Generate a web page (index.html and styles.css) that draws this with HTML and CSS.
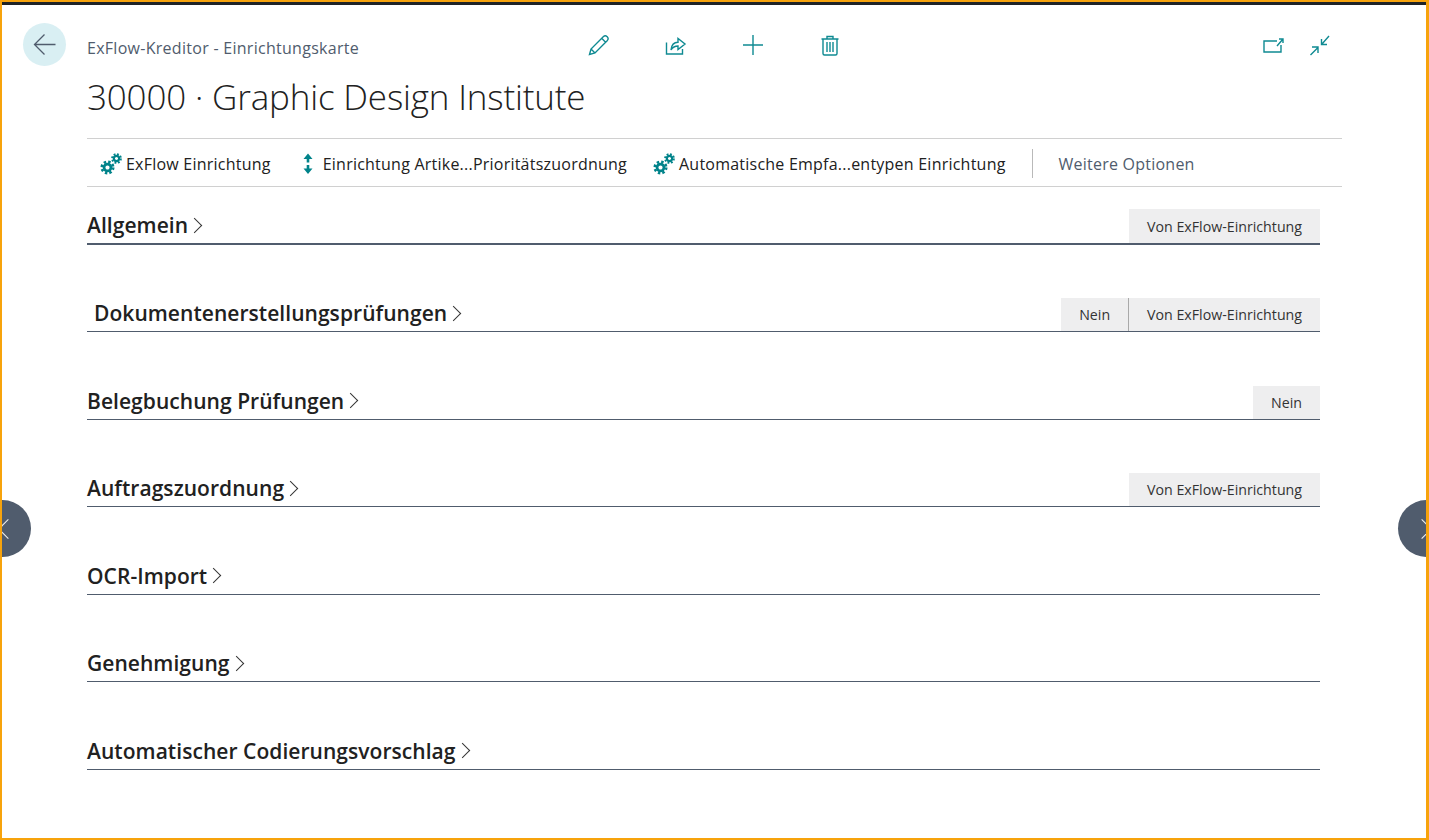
FILE: index.html
```html
<!DOCTYPE html>
<html lang="de">
<head>
    <meta charset="UTF-8">
    <title>ExFlow-Kreditor - Einrichtungskarte</title>
    <link rel="stylesheet" href="styles.css">
</head>
<body>
    <div class="page">
        <header class="top-row">
            <button class="back-button" type="button" aria-label="Zurück">
                <svg width="24" height="24" viewBox="0 0 24 24" fill="none" stroke="#505c6d" stroke-width="1.3"><path d="M22.5 11.5H1.5M11.5 1.5L1.5 11.5L11.5 21.5"/></svg>
            </button>
            <div class="breadcrumb">ExFlow-Kreditor - Einrichtungskarte</div>
            <div class="page-actions">
                <svg class="icon" viewBox="0 0 22 22"><path d="M1.5 20.5L3 15L15.5 2.5C16.5 1.5 18 1.5 19.2 2.7C20.3 3.9 20.4 5.3 19.4 6.4L7 18.9L1.5 20.5ZM3 15L7 18.9M13.7 4.3L17.6 8.2"/></svg>
                <svg class="icon" viewBox="0 0 22 22"><path d="M1.500 8.5V20H17.500V15M6 16C6.500 11 9.500 8.3 13 8.3V4.5L20 10L13 15.500V12C10 12 7.500 13.500 6 16Z"/></svg>
                <svg class="icon" viewBox="0 0 22 22"><path d="M11 1V21M1 11H21"/></svg>
                <svg class="icon" viewBox="0 0 22 22"><path d="M4 5V19.500C4 20.300 4.700 21 5.500 21H16.500C17.300 21 18 20.300 18 19.500V5M2.500 5H19.500M8 5V2.500H14V5M8 8V18M11 8V18M14 8V18"/></svg>
            </div>
            <div class="window-actions">
                <svg class="icon" viewBox="0 0 22 22"><path d="M15 7H2V18H19V11M15 12L21 5M17 5H21V9"/></svg>
                <svg class="icon" viewBox="0 0 22 22"><path d="M20 2L13 10M12.500 5V10.500H18M1.500 21L9 13.500M3 13H9V19"/></svg>
            </div>
        </header>

        <h1 class="page-title">30000 · Graphic Design Institute</h1>

        <nav class="action-bar">
            <a class="action" href="#">
                <svg class="gears" viewBox="0 0 22 22"><use href="#gears"/></svg>
                ExFlow Einrichtung
            </a>
            <a class="action action-sort" href="#">
                <svg class="updown" viewBox="0 0 12 22"><path d="M6 .5L10.500 6H7.300V9.500H4.700V6H1.500ZM6 21L10.500 15.500H7.300V12H4.700V15.500H1.500Z"/></svg>
                Einrichtung Artike...Prioritätszuordnung
            </a>
            <a class="action" href="#">
                <svg class="gears" viewBox="0 0 22 22"><use href="#gears"/></svg>
                Automatische Empfa...entypen Einrichtung
            </a>
            <span class="action-divider"></span>
            <a class="action more" href="#">Weitere Optionen</a>
        </nav>

        <main class="sections">
            <section class="fasttab fasttab-focus">
                <h2>Allgemein<span class="chevron"></span></h2>
                <div class="summary"><span>Von ExFlow-Einrichtung</span></div>
            </section>
            <section class="fasttab">
                <h2 class="indented">Dokumentenerstellungsprüfungen<span class="chevron"></span></h2>
                <div class="summary"><span>Nein</span><span>Von ExFlow-Einrichtung</span></div>
            </section>
            <section class="fasttab">
                <h2>Belegbuchung Prüfungen<span class="chevron"></span></h2>
                <div class="summary"><span>Nein</span></div>
            </section>
            <section class="fasttab">
                <h2>Auftragszuordnung<span class="chevron"></span></h2>
                <div class="summary"><span>Von ExFlow-Einrichtung</span></div>
            </section>
            <section class="fasttab">
                <h2>OCR-Import<span class="chevron"></span></h2>
            </section>
            <section class="fasttab">
                <h2>Genehmigung<span class="chevron"></span></h2>
            </section>
            <section class="fasttab">
                <h2>Automatischer Codierungsvorschlag<span class="chevron"></span></h2>
            </section>
        </main>
    </div>

    <button class="pager pager-prev" type="button" aria-label="Zurück"><span></span></button>
    <button class="pager pager-next" type="button" aria-label="Weiter"><span></span></button>

    <svg class="defs" width="0" height="0">
        <defs>
            <g id="gear" fill="none" stroke="#00838a">
                <circle r="3" stroke-width="2.400"/>
                <circle r="5" stroke-width="2.200" stroke-dasharray="2.100 1.830"/>
            </g>
            <g id="gears">
                <use href="#gear" transform="translate(7.500 14.500) scale(1.150)"/>
                <use href="#gear" transform="translate(16.500 5.500) scale(.880)"/>
            </g>
        </defs>
    </svg>
</body>
</html>
```

FILE: styles.css
```css
* {
    box-sizing: border-box;
}
html,
body {
    margin: 0;
    height: 100%;
}
body {
    position: relative;
    overflow: hidden;
    background-color: #fff;
    color: #212121;
    font-family: "Open Sans", "Noto Sans", sans-serif;
    border: 2px solid #f7a30c;
    border-right-width: 3px;
}
.page {
    height: 100%;
    border-top: 3px solid #1f2327;
    padding: 18px 0 0 21px;
}
a {
    color: inherit;
    text-decoration: none;
}
button {
    border: none;
    padding: 0;
    cursor: pointer;
}

.top-row {
    display: flex;
    align-items: center;
    height: 43px;
}
.back-button {
    display: flex;
    align-items: center;
    justify-content: center;
    flex: none;
    width: 43px;
    height: 43px;
    border-radius: 50%;
    background-color: #d9eff3;
}
.breadcrumb {
    flex: none;
    width: 501px;
    margin-left: 21px;
    padding-top: 7px;
    color: #505c6d;
    font-size: 16px;
    letter-spacing: 0.28px;
}
.page-actions {
    display: flex;
    gap: 55px;
}
.window-actions {
    display: flex;
    gap: 25px;
    margin-left: 421px;
}
.icon {
    width: 22px;
    height: 22px;
    fill: none;
    stroke: #0f8a92;
    stroke-width: 1.4;
}

.page-title {
    margin: 7px 0 0 64px;
    font-size: 35px;
    font-weight: 300;
    line-height: 48px;
    letter-spacing: -0.17px;
}

.action-bar {
    display: flex;
    align-items: center;
    width: 1255px;
    height: 49px;
    margin: 17px 0 0 64px;
    padding: 2px 0 0 13px;
    border-top: 1px solid #d0d0d0;
    border-bottom: 1px solid #d0d0d0;
    font-size: 16px;
    letter-spacing: 0.23px;
}
.action {
    display: flex;
    align-items: center;
    gap: 4px;
    white-space: nowrap;
    margin-right: 26px;
}
.action-sort {
    gap: 9px;
    margin-left: 5px;
}
.gears {
    width: 22px;
    height: 22px;
}
.updown {
    width: 12px;
    height: 22px;
    fill: #00838a;
}
.action-divider {
    width: 1px;
    height: 29px;
    background-color: #b9b9b9;
}
.more {
    margin-left: 26px;
    color: #505c6d;
}

.sections {
    width: 1233px;
    margin: 22px 0 0 64px;
}
.fasttab {
    display: flex;
    align-items: flex-end;
    justify-content: space-between;
    height: 34.500px;
    border-bottom: 1px solid #505c6d;
    margin-bottom: 53px;
}
.fasttab-focus {
    height: 36px;
    margin-bottom: 52.900px;
    border-bottom-width: 2px;
}
.fasttab h2 {
    display: flex;
    align-items: center;
    margin: 0 0 4px;
    font-size: 21px;
    font-weight: 600;
    line-height: 28px;
    letter-spacing: 0.05px;
}
.fasttab h2.indented {
    margin-left: 7px;
}
.chevron {
    width: 11px;
    height: 11px;
    margin-left: 1px;
    border-top: 1px solid #333;
    border-right: 1px solid #333;
    transform: rotate(45deg);
}
.summary {
    display: flex;
    height: 33px;
    font-size: 14.2px;
    color: #333;
}
.fasttab-focus .summary {
    height: 34px;
}
.summary span {
    display: flex;
    align-items: center;
    padding: 0 18px;
    background-color: #eeeeef;
}
.summary span + span {
    border-left: 1px solid #a9a9a9;
}

.pager {
    position: absolute;
    top: 498px;
    width: 57px;
    height: 57px;
    border-radius: 50%;
    background-color: #505c6d;
}
.pager span {
    position: absolute;
    top: 22px;
    width: 14px;
    height: 14px;
    border-top: 1.500px solid #f3f3f3;
    border-right: 1.500px solid #f3f3f3;
}
.pager-prev {
    left: -28px;
}
.pager-prev span {
    right: 16px;
    transform: rotate(-135deg);
}
.pager-next {
    right: -29px;
}
.pager-next span {
    left: 16.500px;
    transform: rotate(45deg);
}
.defs {
    position: absolute;
}
```
